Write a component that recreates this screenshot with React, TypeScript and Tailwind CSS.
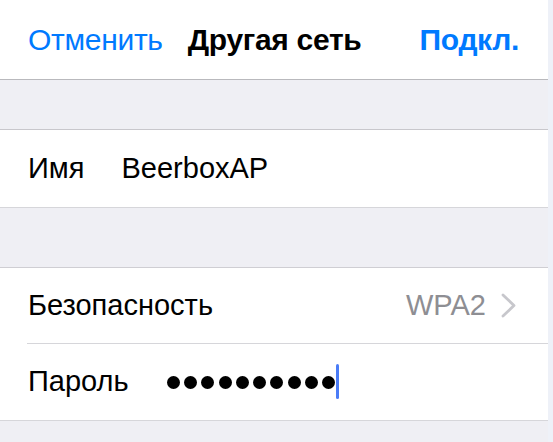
const font = { fontFamily: '"Liberation Sans", Arial, sans-serif' };

function Row({ children, className = "" }: { children: React.ReactNode; className?: string }) {
  return <div className={`flex items-center pl-[28px] pr-[28px] bg-white ${className}`}>{children}</div>;
}

export default function App() {
  return (
    <div className="flex w-[553px] h-[442px] overflow-hidden text-black" style={font}>
      <div className="w-[548px] flex flex-col bg-[#efeff4]">
        {/* nav bar */}
        <div className="h-[80px] shrink-0 bg-white border-b border-[#b9b9bd] flex items-center pl-[28px] pr-[29px] text-[30px] tracking-[-0.3px]">
          <span className="text-[#007aff]">Отменить</span>
          <span className="ml-[25px] font-bold">Другая сеть</span>
          <span className="ml-auto text-[#007aff] font-bold">Подкл.</span>
        </div>

        <div className="h-[50px] shrink-0 border-b border-[#c8c7cc]" />

        <Row className="h-[78px] shrink-0 border-b border-[#d6d6da] text-[29px]">
          <span>Имя</span>
          <span className="ml-[37px]">BeerboxAP</span>
        </Row>

        <div className="h-[60px] shrink-0 border-b border-[#cfced3]" />

        <div className="bg-white border-b border-[#d6d6da] text-[29px]">
          <div className="h-[75px] flex items-center pl-[28px] pr-[32px]">
            <span>Безопасность</span>
            <span className="ml-auto text-[#8e8e93]">WPA2</span>
            <svg className="ml-[15px]" width="15" height="25" viewBox="0 0 15 25" fill="none">
              <path d="M2 2 L13 12.5 L2 23" stroke="#c7c7cc" strokeWidth="2.8" strokeLinecap="round" strokeLinejoin="round" />
            </svg>
          </div>
          <div className="ml-[27px] h-px bg-[#d6d6da]" />
          <div className="h-[76px] flex items-center pl-[28px]">
            <span>Пароль</span>
            <div className="ml-[38px] flex items-center gap-[4.3px]">
              {Array.from({ length: 10 }).map((_, i) => (
                <span key={i} className="block w-[13px] h-[13px] rounded-full bg-black" />
              ))}
            </div>
            <span className="ml-[1px] mb-[2px] block w-[3px] h-[35px] rounded-full bg-[#4a7cf7]" />
          </div>
        </div>
      </div>
      <div className="flex-1 bg-[#eef1f8]" />
    </div>
  );
}
